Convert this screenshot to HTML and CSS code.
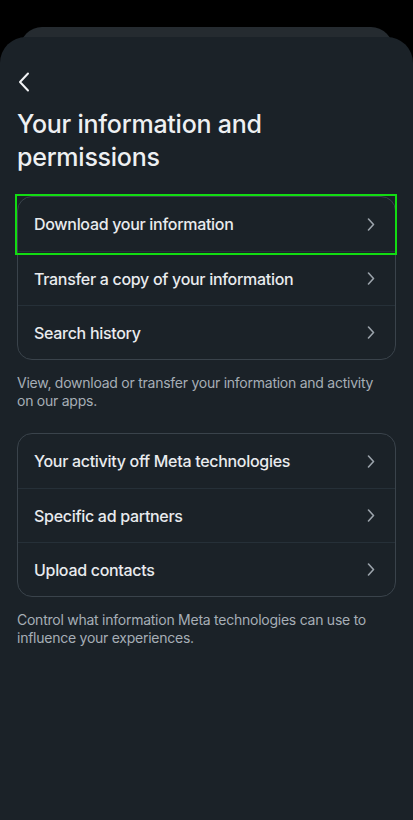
FILE: index.html
```html
<!DOCTYPE html>
<html lang="en">
<head>
    <meta charset="UTF-8">
    <meta name="viewport" content="width=device-width, initial-scale=1.0">
    <title>Your information and permissions</title>
    <link rel="stylesheet" href="styles.css">
</head>
<body>

    <!-- Sheet behind -->
    <div class="back-sheet"></div>

    <!-- Main sheet -->
    <div class="sheet">
        <button class="back-btn" aria-label="Back">
            <svg width="12" height="20" viewBox="0 0 12 20">
                <path d="M10 1.5 L2 10 L10 18.5" fill="none" stroke="#f2f3f5" stroke-width="2" stroke-linecap="round" stroke-linejoin="round"/>
            </svg>
        </button>

        <h1 class="title">Your information and permissions</h1>

        <div class="card">
            <div class="highlight"></div>
            <div class="row">
                <span>Download your information</span>
                <svg class="chev" width="8" height="13" viewBox="0 0 8 13"><path d="M1.5 1 L6.5 6.5 L1.5 12" fill="none" stroke="currentColor" stroke-width="1.6" stroke-linecap="round" stroke-linejoin="round"/></svg>
            </div>
            <div class="row">
                <span>Transfer a copy of your information</span>
                <svg class="chev" width="8" height="13" viewBox="0 0 8 13"><path d="M1.5 1 L6.5 6.5 L1.5 12" fill="none" stroke="currentColor" stroke-width="1.6" stroke-linecap="round" stroke-linejoin="round"/></svg>
            </div>
            <div class="row">
                <span>Search history</span>
                <svg class="chev" width="8" height="13" viewBox="0 0 8 13"><path d="M1.5 1 L6.5 6.5 L1.5 12" fill="none" stroke="currentColor" stroke-width="1.6" stroke-linecap="round" stroke-linejoin="round"/></svg>
            </div>
        </div>
        <p class="caption">View, download or transfer your information and activity on our apps.</p>

        <div class="card">
            <div class="row">
                <span>Your activity off Meta technologies</span>
                <svg class="chev" width="8" height="13" viewBox="0 0 8 13"><path d="M1.5 1 L6.5 6.5 L1.5 12" fill="none" stroke="currentColor" stroke-width="1.6" stroke-linecap="round" stroke-linejoin="round"/></svg>
            </div>
            <div class="row">
                <span>Specific ad partners</span>
                <svg class="chev" width="8" height="13" viewBox="0 0 8 13"><path d="M1.5 1 L6.5 6.5 L1.5 12" fill="none" stroke="currentColor" stroke-width="1.6" stroke-linecap="round" stroke-linejoin="round"/></svg>
            </div>
            <div class="row">
                <span>Upload contacts</span>
                <svg class="chev" width="8" height="13" viewBox="0 0 8 13"><path d="M1.5 1 L6.5 6.5 L1.5 12" fill="none" stroke="currentColor" stroke-width="1.6" stroke-linecap="round" stroke-linejoin="round"/></svg>
            </div>
        </div>
        <p class="caption">Control what information Meta technologies can use to influence your experiences.</p>
    </div>

</body>
</html>
```

FILE: styles.css
```css
* {
    margin: 0;
    padding: 0;
    box-sizing: border-box;
    font-family: Inter, "Noto Sans", sans-serif;
}

body {
    background: #000;
    height: 820px;
    overflow: hidden;
    padding-top: 27px;
}

/* Sheet stacked behind */
.back-sheet {
    height: 30px;
    margin: 0 20px;
    background: #252b30;
    border-radius: 22px 22px 0 0;
}

/* Main sheet */
.sheet {
    position: relative;
    margin-top: -20px;
    height: 783px;
    background: #1b2228;
    border-radius: 26px 26px 0 0;
    padding: 35px 17px 0;
}

.back-btn {
    display: flex;
    background: none;
    border: none;
    padding: 0 0 0 1px;
    height: 20px;
    cursor: pointer;
}

.title {
    margin-top: 16px;
    font-size: 25px;
    line-height: 33px;
    font-weight: 500;
    color: #eef0f2;
    letter-spacing: -0.25px;
    padding-right: 120px;
}

/* Cards */
.card {
    position: relative;
    margin-top: 22px;
    border: 1px solid #3a434b;
    border-radius: 15px;
}

.row {
    height: 54px;
    display: flex;
    align-items: center;
    justify-content: space-between;
    padding: 0 20px 0 16px;
    font-size: 16px;
    font-weight: 500;
    letter-spacing: -0.3px;
    color: #e9ebee;
    border-top: 1px solid #263038;
}

.row:first-of-type,
.highlight + .row {
    border-top: none;
}

.chev {
    color: #9ba3ab;
}

/* Focus highlight around the first row */
.highlight {
    position: absolute;
    top: -3px;
    left: -3px;
    right: -2px;
    height: 61px;
    border: 2px solid #12dc12;
    pointer-events: none;
}

.caption {
    margin-top: 14px;
    font-size: 14px;
    line-height: 18px;
    letter-spacing: -0.25px;
    color: #a6aeb6;
    padding: 0 20px 1px 0;
}
```
